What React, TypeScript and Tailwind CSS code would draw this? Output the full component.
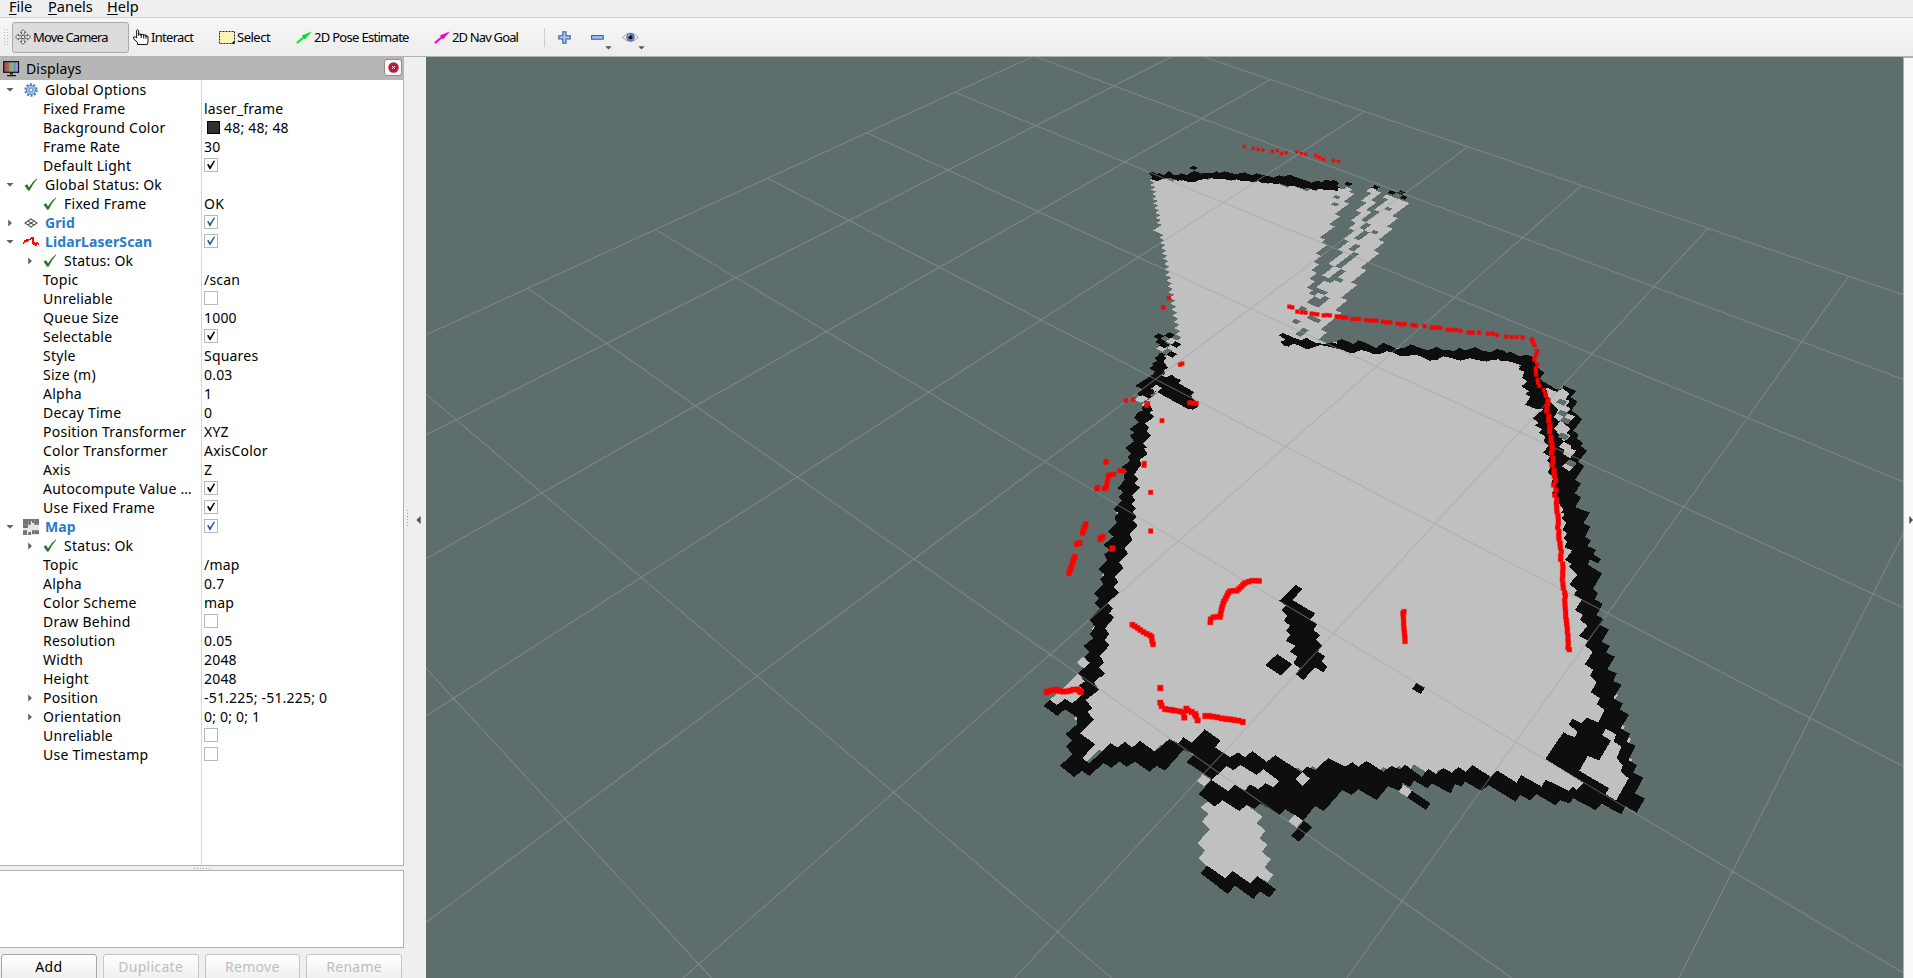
import React from "react";

/* ---------- 3D view geometry ---------- */

type Pt = [number, number];

// Known ground-plane intersections: grid row, grid column, screen x, screen y
const ANCHORS: [number, number, number, number][] = [
  [0, 2, 1270, 79.5], [0, 4, 1467.7, 146.7], [0, 6, 1707.9, 228.4], [0, 7, 1848.7, 276.3],
  [1, 0, 1033.9, 56.75], [3, 0, 866.3, 132.7], [5, 0, 655.4, 229.6], [6, 0, 527.9, 288.3],
  [2, 2, 1124.7, 162.3], [1, 3, 1298.3, 153.3], [1, 4, 1405, 194.7], [1, 5, 1522.3, 237.7],
  [2, 3, 1223, 202.3], [2, 4, 1332.7, 247], [2, 5, 1455, 297.3], [3, 3, 1138, 257],
  [2, 6, 1591.7, 354.3], [3, 5, 1376.7, 365.7], [3, 6, 1520, 432], [3, 7, 1684, 507.3],
  [4, 4, 1155.7, 379], [5, 4, 1045, 461.7], [4, 5, 1286, 446.3], [5, 5, 1178.7, 541.3],
  [6, 5, 1050, 654.3], [4, 6, 1434.3, 523.7], [5, 6, 1333.3, 633.7], [6, 6, 1210.3, 766.7],
  [4, 7, 1606.7, 613.3], [5, 7, 1515.7, 742], [6, 7, 1401.6, 900.9], [4, 8, 1809.8, 718.4],
  [7, 5, 893.7, 792], [8, 4, 564.8, 819.5], [7, 3, 641.2, 577.2], [8, 5, 698.8, 964.3],
];

function solveCamera(): number[] {
  const n = 8;
  const a: number[][] = Array.from({ length: n }, () => new Array(n + 1).fill(0));
  const add = (row: number[], rhs: number) => {
    for (let r = 0; r < n; r++) {
      for (let c = 0; c < n; c++) a[r][c] += row[r] * row[c];
      a[r][n] += row[r] * rhs;
    }
  };
  for (const [i, j, px, py] of ANCHORS) {
    const x = px / 1000;
    const y = py / 1000;
    add([i, j, 1, 0, 0, 0, -i * x, -j * x], x);
    add([0, 0, 0, i, j, 1, -i * y, -j * y], y);
  }
  for (let c = 0; c < n; c++) {
    let p = c;
    for (let r = c + 1; r < n; r++) if (Math.abs(a[r][c]) > Math.abs(a[p][c])) p = r;
    [a[c], a[p]] = [a[p], a[c]];
    for (let r = 0; r < n; r++) {
      if (r === c) continue;
      const f = a[r][c] / a[c][c];
      for (let k = c; k <= n; k++) a[r][k] -= f * a[c][k];
    }
  }
  return a.map((row, r) => row[n] / row[r]);
}

const H = solveCamera();
const depth = (i: number, j: number) => H[6] * i + H[7] * j + 1;
const project = (i: number, j: number): Pt => {
  const w = depth(i, j);
  return [(1000 * (H[0] * i + H[1] * j + H[2])) / w, (1000 * (H[3] * i + H[4] * j + H[5])) / w];
};

function gridPath(): string {
  let d = "";
  const trace = (at: (t: number) => Pt) => {
    let pen = false;
    for (let t = 0; t <= 10; t += 0.25) {
      const [i, j] = at(t);
      if (depth(i, j) < 0.05) {
        pen = false;
        continue;
      }
      const [x, y] = project(i, j);
      d += (pen ? "L" : "M") + x.toFixed(1) + " " + y.toFixed(1);
      pen = true;
    }
  };
  for (let k = 0; k <= 10; k++) {
    trace((t) => [k, t]);
    trace((t) => [t, k]);
  }
  return d;
}

/* Traces are stored in thirds of a pixel, relative to a tile's corner. */
type Tile = Pt;
const A: Tile = [1120, 130];
const B: Tile = [1000, 380];
const C: Tile = [1400, 330];
const D: Tile = [1000, 620];

const pts = (tile: Tile, s: string): Pt[] =>
  s.trim().split(/\s+/).map((p) => {
    const [x, y] = p.split(",").map(Number);
    return [tile[0] + x / 3, tile[1] + y / 3] as Pt;
  });

const raw = (s: string): Pt[] => s.trim().split(/\s+/).map((p) => p.split(",").map(Number) as Pt);

const FREE = 1;
const WALL = 2;
const UNKNOWN = 0;
const TINT = ["#5d6e6c", "#c0c0c0", "#0e0e0e"];

type Region = { v: number; poly: Pt[] };
type Marks = { v: number; at: Pt[] };

/* Large areas, rasterised to occupancy cells */
const AREAS: Region[] = [
  { v: FREE, poly: raw("1178,330 1170,350 1160,380 1147,403 1140,430 1128,480 1120,530 1107,580 1097,630 1090,670 1083,710 1078,745 1084,758 1130,748 1180,742 1230,758 1280,768 1330,772 1400,768 1480,778 1560,790 1612,802 1628,780 1622,730 1605,680 1590,630 1577,560 1565,500 1550,430 1540,390 1525,364 1500,357 1440,353 1380,349 1330,344 1285,338 1200,320") },
  { v: FREE, poly: pts(A, "95,150 180,150 300,145 420,155 560,178 650,182 690,165 770,175 805,192 855,220 825,260 800,305 775,345 765,370 735,410 710,450 680,495 665,530 640,570 612,600 602,636 480,640 180,640 178,610 165,570 150,490 135,400 115,300") },
  { v: UNKNOWN, poly: pts(A, "695,150 755,175 745,200 720,235 720,250 705,265 690,290 695,305 675,325 680,335 655,355 665,370 635,390 640,405 615,430 620,445 595,462 608,475 585,495 560,490 575,465 575,440 582,410 590,385 610,350 605,330 630,295 645,265 655,240 665,230 690,205 692,180") },
  { v: UNKNOWN, poly: pts(A, "775,170 805,190 800,205 775,235 755,265 740,295 748,315 712,345 712,365 705,375 690,400 665,425 660,450 640,458 625,465 630,440 655,415 652,400 685,372 692,350 712,322 722,300 735,265 745,235 768,200") },
];

const CELL_EDITS: Marks[] = [
  { v: UNKNOWN, at: pts(A, "655,200 645,225 800,238 757,303 573,507 573,490 610,500 600,510 615,490 565,515 603,524 590,531 555,540 538,577 575,572 585,565 562,604 550,611 165,628") },
  { v: FREE, at: pts(A, "672,185 682,180 150,635 150,655 130,662 122,655 140,690") },
];

/* Stepped outlines, painted in order above the rasterised areas */
const SHAPES: Region[] = [
  // far wall
  { v: WALL, poly: pts(A, "86,128 98,126 108,131 118,130 132,136 145,124 155,128 160,134 172,135 185,130 200,136 215,126 222,122 235,127 245,131 260,128 275,130 290,124 300,129 312,124 328,128 345,132 360,130 375,127 385,133 400,135 410,130 425,134 445,138 460,143 478,136 490,140 510,133 525,141 545,147 560,152 575,158 590,152 605,156 618,149 632,153 642,148 657,160 650,168 662,172 652,176 655,183 640,181 620,181 600,177 580,180 568,174 550,176 535,171 515,167 500,167 480,160 465,163 450,158 430,160 415,154 395,157 382,152 365,153 350,148 330,151 310,147 290,148 272,144 255,147 235,150 225,157 205,157 190,150 172,152 160,146 140,144 122,149 112,154 100,149 92,148 96,140") },
  // left recess
  { v: WALL, poly: pts(A, "118,668 137,672 130,679 140,684 132,690 132,697 145,714 130,722 136,730 125,738 140,742 155,734 168,744 185,750 175,760 200,773 224,788 212,796 234,824 232,832 218,839 200,835 115,788 102,784 100,790 88,795 97,800 80,808 50,792 56,785 68,778 46,768 60,758 100,733 105,725 88,715 100,706 95,700 112,693 102,684 115,678") },
  // left wall
  { v: WALL, poly: pts(B, "428,60 440,70 425,82 428,92 415,97 402,112 416,128 388,147 402,157 390,167 402,184 376,203 394,220 384,230 390,243 364,262 382,275 371,286 374,300 352,325 370,337 356,350 366,362 340,388 356,400 344,412 350,428 325,455 340,470 310,495 330,510 312,523 322,540 295,567 314,583 300,598 310,612 282,642 298,655 283,670 300,685 267,717 285,740 270,762 280,775 250,798 268,815 255,830 265,850 235,880 250,890 305,890 314,880 298,862 312,847 300,828 329,795 315,780 327,762 315,745 343,712 327,700 340,685 322,670 356,638 340,622 354,606 345,590 370,563 358,548 384,520 374,505 398,480 388,462 413,436 400,422 410,408 398,395 408,385 396,372 405,360 396,345 420,322 403,310 415,297 402,285 410,272 425,252 418,240 443,222 432,205 440,203 430,190 452,167 440,155 446,143 436,130 464,110 448,98 458,92 450,75") },
  { v: FREE, poly: pts(D, "235,160 255,185 240,198 252,212 235,240 215,250 195,237 170,257 148,240 190,205") },
  // lower-left corner and lower wall
  { v: WALL, poly: pts(D, "235,160 275,140 314,158 282,188 297,210 257,240 278,265 262,275 282,300 240,340 285,372 247,415 268,430 332,370 352,382 375,366 397,382 420,363 465,395 508,357 535,370 550,352 575,368 614,328 662,362 645,382 690,412 714,397 735,412 757,393 800,425 826,406 905,457 922,440 945,450 985,414 1035,440 1057,427 1075,440 1100,423 1150,455 1175,438 1205,450 1205,512 1190,510 1165,498 1130,540 1075,508 1055,525 1027,510 972,573 945,558 910,602 855,567 838,585 780,550 765,567 740,555 718,573 670,542 645,560 595,522 635,480 632,474 560,427 582,402 550,390 495,452 470,438 448,455 405,425 380,440 358,425 335,443 310,430 268,468 245,452 223,472 180,437 218,402 198,380 215,362 197,342 232,312 232,292 195,268 172,288 130,257 150,240 170,255 195,237 217,250 238,232 252,212 235,196 255,185") },
  { v: FREE, poly: pts(D, "635,480 680,438 700,450 722,435 770,465 790,448 838,484 820,502 797,490 775,507 750,493 735,512 705,495 685,514") },
  { v: FREE, poly: pts(D, "633,480 613,500 591,483 607,463") },
  { v: FREE, poly: pts(D, "623,545 645,560 667,541 718,573 740,555 788,590 770,610 797,632 778,655 803,675 785,695 812,718 793,742 820,765 803,786 772,770 752,791 697,755 675,775 620,738 597,714 615,692 592,670 630,627 606,604 625,582 602,561") },
  { v: WALL, poly: pts(D, "621,737 675,774 697,753 752,790 772,769 828,808 808,833 780,814 760,837 705,797 683,822 602,760") },
  { v: WALL, poly: pts(D, "912,602 936,621 897,665 873,648") },
  { v: FREE, poly: pts(D, "908,457 930,476 908,497 886,478") },
  { v: FREE, poly: pts(D, "884,583 908,602 890,623 865,604") },
  { v: FREE, poly: pts(D, "248,111 270,128 252,146 231,128") },
  // near wall, lower right
  { v: WALL, poly: pts(C, "-3,1320 15,1304 65,1340 85,1317 108,1332 130,1314 155,1328 175,1311 197,1325 218,1306 272,1340 292,1322 350,1358 363,1335 425,1370 437,1349 505,1382 520,1370 530,1380 550,1358 436,1287 490,1207 505,1215 525,1222 532,1205 506,1183 518,1166 545,1180 562,1163 595,1178 630,1150 650,1240 675,1390 690,1405 664,1452 605,1422 586,1440 520,1405 508,1420 480,1410 467,1426 410,1393 390,1411 360,1395 347,1415 265,1365 245,1383 195,1355 185,1370 165,1362 152,1390 95,1360 83,1375 42,1352 30,1372 -3,1352") },
  { v: WALL, poly: pts(C, "22,1403 35,1382 91,1420 78,1440") },
  { v: FREE, poly: pts(C, "10,1365 36,1382 22,1401 -4,1386") },
  // right wall
  { v: WALL, poly: pts(C, "345,98 395,78 405,100 420,120 434,128 420,145 430,155 470,178 488,176 490,166 530,184 512,202 533,215 515,240 546,268 520,302 536,315 530,325 550,340 542,348 561,362 535,395 552,410 525,450 543,460 525,490 543,502 526,532 570,548 550,580 570,590 555,620 573,632 562,648 588,660 580,672 602,688 595,700 567,688 565,705 606,730 580,775 594,790 585,808 608,822 590,855 611,868 600,885 627,899 605,935 630,948 618,968 645,980 622,1018 650,1030 640,1053 665,1064 640,1105 668,1120 660,1138 687,1155 662,1195 690,1211 680,1235 707,1248 685,1290 711,1305 700,1328 730,1343 705,1390 735,1405 710,1448 675,1428 640,1412 655,1380 620,1250 595,1176 614,1140 590,1122 600,1105 573,1087 590,1055 570,1038 580,1020 555,1003 578,965 555,947 564,932 537,918 562,888 540,868 549,855 525,840 546,808 522,795 531,780 508,763 531,735 507,710 516,702 495,690 516,662 495,648 502,635 490,625 502,610 487,600 500,575 485,565 497,548 480,525 470,510 455,490 465,475 455,460 460,440 443,427 455,405 442,392 450,380 430,368 446,347 430,333 437,320 416,308 426,297 405,287 416,278 397,265 430,238 410,238 375,224 392,200 375,192 387,184 364,168 383,155 366,143 374,125 355,118 366,108") },
  { v: FREE, poly: pts(C, "438,172 470,186 488,176 508,190 496,208 510,212 498,228 512,235 500,248 525,260 508,275 490,280 512,296 500,310 513,318 492,335 515,348 512,355 528,362 510,385 490,372 494,360 476,350 492,335 463,295 480,275 462,262 474,240 450,215 442,190") },
  { v: FREE, poly: pts(C, "498,398 520,412 508,424 487,410") },
  { v: WALL, poly: pts(C, "472,470 482,525 494,532 484,548 497,552 488,565 500,580 487,598 503,613 490,625 505,640 494,652 518,662 540,600 520,480") },
  // corner pocket
  { v: FREE, poly: pts(C, "563,1278 597,1291 633,1232 606,1215 618,1196 649,1214 640,1233 664,1250 650,1285 668,1305 662,1325 686,1345 648,1412 616,1392 627,1375 538,1322") },
  // upper room wall
  { v: WALL, poly: pts(A, "476,615 488,609 510,618 530,627 545,630 560,624 575,632 590,640 615,641 635,637 650,641 652,633 665,627 680,633 700,643 715,631 735,638 755,648 770,654 780,645 790,639 810,647 830,657 852,654 872,643 890,650 920,660 935,658 950,650 970,660 990,661 1000,664 1018,654 1037,661 1065,651 1085,661 1110,667 1130,657 1150,662 1160,669 1172,665 1200,680 1218,673 1240,682 1235,740 1205,716 1195,710 1205,705 1165,694 1145,694 1135,688 1115,690 1100,695 1070,690 1050,685 1020,692 995,684 970,679 950,690 928,692 905,680 890,675 865,677 842,679 820,668 800,664 780,672 762,673 740,664 722,660 705,668 690,669 665,659 645,655 620,648 600,645 580,652 562,658 540,648 520,641 505,650 490,646 482,634 498,630") },
  // obstacles inside the room
  { v: WALL, poly: pts(B, "887,615 908,627 877,660 945,700 935,715 930,720 952,732 940,750 960,765 948,780 967,797 953,815 975,828 965,845 983,860 970,877 945,862 910,900 887,882 900,865 880,850 893,830 870,815 886,797 857,783 870,765 858,752 870,737 851,722 863,707 843,690 858,677 838,662") },
  { v: WALL, poly: pts(B, "832,822 877,853 842,886 795,855") },
  { v: WALL, poly: pts(C, "50,1059 75,1073 62,1092 36,1077") },
];

/* Isolated cells that keep the local cell's shape */
const LOOSE: Marks[] = [
  { v: WALL, at: pts(A, "221,114 685,162 767,172 815,188 844,188 850,202 117,619 149,616 121,635 133,645 168,644 156,673") },
  { v: FREE, at: pts(A, "110,775 68,806 60,808") },
  { v: UNKNOWN, at: pts(C, "485,216 487,250 497,272 490,319 513,400") },
];

const inside = (x: number, y: number, poly: Pt[]) => {
  let hit = false;
  for (let a = 0, b = poly.length - 1; a < poly.length; b = a++) {
    const [ax, ay] = poly[a];
    const [bx, by] = poly[b];
    if (ay > y !== by > y && x < ((bx - ax) * (y - ay)) / (by - ay) + ax) hit = !hit;
  }
  return hit;
};

const toPath = (poly: Pt[]) => "M" + poly.map((p) => p[0].toFixed(2) + " " + p[1].toFixed(2)).join("L") + "Z";

const ROWS = 150;
const COLS = 180;
const RES = 20;

function buildMap() {
  const cells: number[][] = [];
  const centre: Pt[][] = [];
  for (let i = 0; i < ROWS; i++) {
    cells.push([]);
    centre.push([]);
    for (let j = 0; j < COLS; j++) {
      const u = (i + 0.5) / RES;
      const v = (j + 0.5) / RES;
      const p: Pt = depth(u, v) > 0.05 ? project(u, v) : [-1, -1];
      let value = 0;
      if (p[0] > 1060 && p[0] < 1660 && p[1] > 160 && p[1] < 820) {
        for (const r of AREAS) if (inside(p[0], p[1], r.poly)) value = r.v;
      }
      cells[i].push(value);
      centre[i].push(p);
    }
  }
  const nearest = (x: number, y: number): Pt => {
    let best = Infinity;
    let at: Pt = [0, 0];
    for (let i = 0; i < ROWS; i++) {
      for (let j = 0; j < COLS; j++) {
        const [cx, cy] = centre[i][j];
        const d = (cx - x) ** 2 + ((cy - y) * 1.6) ** 2;
        if (d < best) {
          best = d;
          at = [i, j];
        }
      }
    }
    return at;
  };
  for (const m of CELL_EDITS) {
    for (const [x, y] of m.at) {
      const [i, j] = nearest(x, y);
      cells[i][j] = m.v;
    }
  }
  const quad = (i0: number, j0: number, i1: number, j1: number): Pt[] => [
    project(i0 / RES, j0 / RES),
    project(i0 / RES, j1 / RES),
    project(i1 / RES, j1 / RES),
    project(i1 / RES, j0 / RES),
  ];
  let free = "";
  for (let i = 0; i < ROWS; i++) {
    for (let j = 0; j < COLS; ) {
      const v = cells[i][j];
      let k = j + 1;
      while (k < COLS && cells[i][k] === v) k++;
      if (v) free += toPath(quad(i - 0.05, j - 0.05, i + 1.05, k + 0.05));
      j = k;
    }
  }
  const loose = LOOSE.flatMap((m) =>
    m.at.map(([x, y]) => {
      const [i, j] = nearest(x, y);
      const dx = x - centre[i][j][0];
      const dy = y - centre[i][j][1];
      return { v: m.v, d: toPath(quad(i, j, i + 1, j + 1).map(([a, b]) => [a + dx, b + dy] as Pt)) };
    })
  );
  return { free, loose };
}

const SCAN: { s: number; at: Pt[] }[] = [
  { s: 3, at: pts(A, "373,49 400,55 415,58 429,60 457,64 472,62 485,71 499,68 530,66 544,70 557,73 587,76 598,82 610,88 640,91 655,94") },
  { s: 4, at: pts(A, "147,504 130,532 508,530 517,532 532,545 545,547 557,548 575,551 583,552 592,553 611,556 620,555 630,556 650,559 660,561 670,562 678,562 697,567 706,567 717,567 738,570 748,572 758,572 769,572 789,575 800,578 811,577 833,581 844,583 854,582 877,585 887,587 913,588 936,593 945,593 953,593 961,594 983,599 995,600 1009,600 1022,603 1046,607 1058,608 1077,607 1104,611 1118,611 1131,615 1158,620 1174,621 1190,621 1208,622 180,704 187,701") },
  { s: 4, at: pts(C, "396,28 399,36 403,45 411,63 408,75 404,85 403,90 412,103 407,115 408,123 408,134 413,150 414,158 418,168 431,180 436,190 437,197") },
  { s: 5, at: pts(C, "444,212 443,222 441,232 440,243 447,258 446,272 450,288 449,296 449,306 453,322 453,332 456,345 457,356 454,370 456,362 459,385 459,395 456,405 462,420 462,430 463,438 467,452 461,465 468,480 464,495 470,509 469,520 470,532 471,545 474,557 475,568 475,580 473,592 477,605 476,616 477,627 480,640 481,652 484,665 482,678 482,688 488,702 489,713 488,725 488,737 487,749 489,762 490,774 494,788 496,798 494,812 495,824 496,836 497,848 497,860 499,871 500,883 502,894 502,906 504,917 504,929 505,940 504,952 508,959 12,845 9,850 10,862 11,873 11,884 12,896 13,908 14,918 15,926 15,934") },
  { s: 4, at: pts(B, "378,62 399,58") },
  { s: 4.6, at: pts(B, "440,77 443,71 569,68 579,69 589,70 486,122 317,247 319,244 433,250 432,256 452,337 452,453 360,272 370,273 341,283 329,285 324,288 324,298 321,308 320,318 317,324 312,326 293,322 290,327") },
  { s: 5.3, at: pts(B, "257,433 254,442 251,451 248,458 239,489 230,493 224,531 220,541 217,551 213,563 210,571 207,579 308,470 303,474 301,478 338,504 336,507 631,727 632,718 640,712 650,710 660,711 662,702 664,690 666,682 669,672 672,664 677,655 681,647 685,639 690,634 700,632 710,632 716,627 723,621 729,614 735,609 745,605 755,602 767,602 777,603 397,734 405,739 413,744 421,750 430,756 440,761 449,766 455,770 456,782 459,793") },
  { s: 5.7, at: pts(D, "140,216 150,213 160,210 170,209 180,213 190,215 200,214 210,212 220,209 232,208 239,213 242,216 481,204 481,248 485,258 495,267 505,269 515,270 525,272 540,274 550,278 553,293 559,266 565,272 575,276 585,282 588,288 593,301 616,288 627,288 640,290 652,292 665,295 678,297 690,298 702,300 715,302 728,306") },
];

function scanPath(grow: number): string {
  let d = "";
  for (const g of SCAN) {
    for (const [x, y] of g.at) {
      const s = g.s + grow;
      d += `M${(x - s / 2).toFixed(2)} ${(y - s / 2).toFixed(2)}h${s}v${s}h${-s}z`;
    }
  }
  return d;
}

const MAP = buildMap();
const GRID = gridPath();

function Viewport() {
  return (
    <svg className="block h-[921px] w-[1477px] shrink-0 bg-[#5d6e6c]" viewBox="426 57 1477 921">
      <g shapeRendering="crispEdges">
        <path d={MAP.free} fill="#c0c0c0" />
        {SHAPES.map((s, k) => (
          <path key={k} d={toPath(s.poly)} fill={TINT[s.v]} />
        ))}
        {MAP.loose.map((s, k) => (
          <path key={k} d={s.d} fill={TINT[s.v]} />
        ))}
      </g>
      <path d={GRID} fill="none" stroke="#a0a0a4" strokeOpacity="0.5" strokeWidth="1.1" />
      <path d={scanPath(0.7)} fill="#ff0000" fillOpacity="0.4" />
      <path d={scanPath(-0.3)} fill="#ff0000" />
    </svg>
  );
}

/* ---------- icons ---------- */

const GearIcon = () => (
  <svg width="14" height="14" viewBox="0 0 14 14">
    <circle cx="7" cy="7" r="5.7" fill="none" stroke="#4a7cc0" strokeWidth="2" strokeDasharray="2 1.58" />
    <circle cx="7" cy="7" r="4.6" fill="#a9c4e6" stroke="#4a7cc0" strokeWidth="0.9" />
    <circle cx="7" cy="7" r="2" fill="#eef3fa" stroke="#4a7cc0" strokeWidth="0.9" />
  </svg>
);

const TickIcon = () => (
  <svg width="14" height="14" viewBox="0 0 14 14">
    <path d="M0.6 7.4 L3.2 6.3 L5 9.4 Q8 4 12.8 0.6 L13.2 1 Q8.6 6 5.6 12.6 L4.2 12.8 Z" fill="#22752a" />
  </svg>
);

const GridIcon = () => (
  <svg width="14" height="10" viewBox="0 0 14 10" fill="none" stroke="#555" strokeWidth="1.1">
    <path d="M7 1 L13 5 L7 9 L1 5 Z M4 3 L10 7 M10 3 L4 7" />
  </svg>
);

const ScanIcon = () => (
  <svg width="16" height="10" viewBox="0 0 16 10" fill="#fb0505" shapeRendering="crispEdges">
    <path d="M0 5h1v-2h2v-1h4v-1h1v-1h3v5h1v1h1v-1h2v1h1v2h-1v-1h-1v2h-2v-1h-2v-1h-1v-5h-1v1h-2v1h-1v1h-3v1h-1v1h-1z" />
  </svg>
);

const MapIcon = () => (
  <svg width="16" height="16" viewBox="0 0 16 16" shapeRendering="crispEdges">
    <rect width="16" height="16" fill="#e6e6e6" />
    <path d="M0 0h9v2h-1v4h-3v3h-5z M9 0h7v6h-5v-2h-2z M0 11h4v5h-4z M5 13h3v3h-3z M9 11h7v4h-7z" fill="#747474" />
    <path d="M0 5.5H16M0 11.5H16M5.5 0V16M11.5 0V16" stroke="#fff" strokeOpacity="0.2" strokeWidth="1" />
  </svg>
);

const MonitorIcon = () => (
  <svg width="17" height="16" viewBox="0 0 17 16">
    <defs>
      <linearGradient id="screen" x1="0" x2="1">
        <stop offset="0" stopColor="#a84848" />
        <stop offset="0.33" stopColor="#b06060" />
        <stop offset="0.34" stopColor="#6fae6f" />
        <stop offset="0.66" stopColor="#7fc07f" />
        <stop offset="0.67" stopColor="#7878c8" />
        <stop offset="1" stopColor="#a8a8f0" />
      </linearGradient>
    </defs>
    <rect x="0.7" y="0.7" width="14.8" height="10.6" fill="url(#screen)" stroke="#111" strokeWidth="1.2" />
    <path d="M7 11.5h3v2h-3zM4 14h9v1.3h-9z" fill="#111" />
  </svg>
);

const MoveIcon = () => (
  <svg width="16" height="16" viewBox="0 0 16 16" fill="#f4f4f4" stroke="#4a4a4a" strokeWidth="0.9">
    <path d="M8 0.6 L10.8 3.4 H9.2 V5.6 L10.4 6.8 H12.6 V5.2 L15.5 8 L12.6 10.8 V9.2 H10.4 L9.2 10.4 V12.6 H10.8 L8 15.4 L5.2 12.6 H6.8 V10.4 L5.6 9.2 H3.4 V10.8 L0.5 8 L3.4 5.2 V6.8 H5.6 L6.8 5.6 V3.4 H5.2 Z" />
    <circle cx="8" cy="8" r="1.7" />
  </svg>
);

const HandIcon = () => (
  <svg width="16" height="16" viewBox="0 0 16 16" fill="#fff" stroke="#111" strokeWidth="1">
    <path d="M4.5 15.5 V13.5 L0.6 9.8 V8 H2.4 L3.6 9 V1.5 L4.4 0.6 L5.6 1.5 V6.5 V5 H8 V7 V5.5 H10.6 V7.5 V6 H13 V8 V6.8 L15 7.4 V13 L14.2 15.5 Z" />
    <path d="M8.2 7v2M10.7 7.5v2M13 8v1.8" />
  </svg>
);

const SelectIcon = () => (
  <svg width="16" height="13" viewBox="0 0 16 13">
    <rect x="0.5" y="0.5" width="15" height="12" fill="#fcf3b4" stroke="#222" strokeDasharray="2 1" />
    <path d="M15.5 9.5V12.5H12.5Z" fill="#000" />
  </svg>
);

const ArrowIcon = ({ color, dark }: { color: string; dark: string }) => (
  <svg width="16" height="13" viewBox="0 0 16 13">
    <path d="M0.8 12 L7.5 6.5" stroke={color} strokeWidth="2.2" />
    <path d="M15.8 0.4 L5.6 4.6 L8 6 L9 8.4 Z" fill={color} />
    <path d="M6.4 5 L8.6 8 L8.8 5.6 Z" fill={dark} />
  </svg>
);

const EyeIcon = () => (
  <svg width="17" height="11" viewBox="0 0 17 11">
    <path d="M0.6 5.5 Q8.5 -3.5 16.4 5.5 Q8.5 13.5 0.6 5.5Z" fill="#f3f3f1" stroke="#a5a5a0" strokeWidth="1" />
    <circle cx="8.5" cy="5.3" r="4" fill="#6f80b8" stroke="#55629a" strokeWidth="0.6" />
    <circle cx="8.5" cy="5.3" r="2" fill="#0b1030" />
    <circle cx="6.8" cy="3.6" r="0.8" fill="#dfe5ff" />
  </svg>
);

const DropArrow = () => (
  <svg width="7" height="4" viewBox="0 0 7 4">
    <path d="M0.3 0.3H6.7L3.5 3.6Z" fill="#555" />
  </svg>
);

const PlusIcon = () => (
  <svg width="13" height="13" viewBox="0 0 13 13">
    <path d="M4.8 0.8h3.2v4h4.2v3.2h-4.2v4.2h-3.2v-4.2h-4v-3.2h4z" fill="#a9c5ea" stroke="#2f62a8" strokeWidth="1.1" />
  </svg>
);

const MinusIcon = () => (
  <svg width="13" height="5" viewBox="0 0 13 5">
    <rect x="0.6" y="0.6" width="11.6" height="3.6" fill="#a9c5ea" stroke="#2f62a8" strokeWidth="1.1" />
  </svg>
);

/* ---------- property tree ---------- */

type Row = {
  level?: 0 | 1;
  open?: boolean;
  expandable?: boolean;
  icon?: React.ReactNode;
  label: string;
  accent?: boolean;
  value?: string;
  swatch?: boolean;
  check?: boolean;
};

const ROWS_DATA: Row[] = [
  { level: 0, open: true, expandable: true, icon: <GearIcon />, label: "Global Options" },
  { label: "Fixed Frame", value: "laser_frame" },
  { label: "Background Color", value: "48; 48; 48", swatch: true },
  { label: "Frame Rate", value: "30" },
  { label: "Default Light", check: true },
  { level: 0, open: true, expandable: true, icon: <TickIcon />, label: "Global Status: Ok" },
  { icon: <TickIcon />, label: "Fixed Frame", value: "OK" },
  { level: 0, expandable: true, icon: <GridIcon />, label: "Grid", accent: true, check: true },
  { level: 0, open: true, expandable: true, icon: <ScanIcon />, label: "LidarLaserScan", accent: true, check: true },
  { expandable: true, icon: <TickIcon />, label: "Status: Ok" },
  { label: "Topic", value: "/scan" },
  { label: "Unreliable", check: false },
  { label: "Queue Size", value: "1000" },
  { label: "Selectable", check: true },
  { label: "Style", value: "Squares" },
  { label: "Size (m)", value: "0.03" },
  { label: "Alpha", value: "1" },
  { label: "Decay Time", value: "0" },
  { label: "Position Transformer", value: "XYZ" },
  { label: "Color Transformer", value: "AxisColor" },
  { label: "Axis", value: "Z" },
  { label: "Autocompute Value …", check: true },
  { label: "Use Fixed Frame", check: true },
  { level: 0, open: true, expandable: true, icon: <MapIcon />, label: "Map", accent: true, check: true },
  { expandable: true, icon: <TickIcon />, label: "Status: Ok" },
  { label: "Topic", value: "/map" },
  { label: "Alpha", value: "0.7" },
  { label: "Color Scheme", value: "map" },
  { label: "Draw Behind", check: false },
  { label: "Resolution", value: "0.05" },
  { label: "Width", value: "2048" },
  { label: "Height", value: "2048" },
  { expandable: true, label: "Position", value: "-51.225; -51.225; 0" },
  { expandable: true, label: "Orientation", value: "0; 0; 0; 1" },
  { label: "Unreliable", check: false },
  { label: "Use Timestamp", check: false },
];

const Expander = ({ open }: { open?: boolean }) => (
  <svg width="8" height="8" viewBox="0 0 8 8" fill="#626262">
    {open ? <path d="M0.5 2H7.5L4 5.8Z" /> : <path d="M2.2 0.5V7.5L6 4Z" />}
  </svg>
);

const Check = ({ on, accent }: { on: boolean; accent?: boolean }) => (
  <span className="mt-[2px] flex h-[14px] w-[14px] items-center justify-center self-start border border-[#b8b8b8] bg-white">
    {on && (
      <svg width="10" height="10" viewBox="0 0 10 10">
        <path d="M1 4.6 L2.8 4 L4 6.4 L7.6 0.8 L9.2 0.8 L4.4 9.2 H3.6 Z" fill={accent ? "#25639e" : "#000"} />
      </svg>
    )}
  </span>
);

function TreeRow({ row }: { row: Row }) {
  const top = row.level === 0;
  return (
    <div className="flex h-[19px] shrink-0 whitespace-nowrap">
      <div className="flex w-[201px] items-center">
        <span className={`flex shrink-0 items-center justify-center ${top ? "w-[20px]" : "ml-[20px] w-[20px]"}`}>
          {row.expandable && <Expander open={row.open} />}
        </span>
        {row.icon && (
          <span className={`flex shrink-0 items-center justify-center ${top ? "w-[22px]" : "w-[21px] pr-[2px]"}`}>
            {row.icon}
          </span>
        )}
        <span
          className={`leading-[19px] ${row.icon ? "ml-[3px]" : "ml-[3px]"} ${
            row.accent ? "font-bold tracking-[0.1px] text-[#2a7bc8]" : "tracking-[0.25px]"
          }`}
        >
          {row.label}
        </span>
      </div>
      <div className="flex flex-1 items-center border-l border-[#d8d8d8] pl-[2px]">
        {row.swatch && <span className="mr-[4px] ml-[3px] h-[13px] w-[13px] border border-black bg-[#303030]" />}
        {row.value && <span className="leading-[19px] tracking-[0.2px]">{row.value}</span>}
        {row.check !== undefined && <Check on={row.check} accent={row.accent} />}
      </div>
    </div>
  );
}

/* ---------- chrome ---------- */

const Tool = ({ icon, label, className }: { icon: React.ReactNode; label: string; className: string }) => (
  <div className={`flex h-[31px] shrink-0 items-center whitespace-nowrap ${className}`}>
    <span className="mr-[2px] flex w-[16px] shrink-0 justify-center">{icon}</span>
    <span className="pt-px">{label}</span>
  </div>
);

const Button = ({ label, disabled }: { label: string; disabled?: boolean }) => (
  <div
    className={`flex h-[30px] flex-1 items-start justify-center rounded-[3px] border bg-gradient-to-b from-white to-[#ececec] pt-px leading-[21px] tracking-[0.3px] ${
      disabled ? "border-[#c6c6c6] text-[#bebebe]" : "border-[#a6a6a6] text-black"
    }`}
  >
    {label}
  </div>
);

export default function App() {
  return (
    <div className="flex h-[978px] w-[1913px] flex-col overflow-hidden bg-[#efefef] font-['Noto_Sans',sans-serif] text-[14px] text-black">
      <div className="flex h-[17px] shrink-0 items-start pl-[9px] text-[14.5px] leading-[13px]">
        {[
          ["F", "ile", "w-[39px]"],
          ["P", "anels", "w-[59px]"],
          ["H", "elp", "w-[40px]"],
        ].map(([a, b, w]) => (
          <span key={a} className={w}>
            <span className="underline decoration-1 underline-offset-[2px]">{a}</span>
            {b}
          </span>
        ))}
      </div>

      <div className="flex h-[40px] shrink-0 items-center border-t border-b border-t-[#d2d2d2] border-b-[#b2b2b2] bg-gradient-to-b from-[#f7f7f7] to-[#ececec] text-[13px] tracking-[-0.7px]">
        <div className="ml-[4px] grid w-[8px] grid-cols-[1px_1px] gap-[2px]">
          {Array.from({ length: 12 }, (_, k) => (
            <span key={k} className="h-px w-px bg-[#b8b8b8]" />
          ))}
        </div>
        <Tool icon={<MoveIcon />} label="Move Camera" className="w-[117px] rounded-[3px] border border-[#a9a9a9] bg-[#dcdcdc] pl-[2px] tracking-[-0.85px]" />
        <Tool icon={<HandIcon />} label="Interact" className="w-[86px] pl-[4px]" />
        <Tool icon={<SelectIcon />} label="Select" className="w-[77px] pl-[4px] tracking-[-0.5px]" />
        <Tool icon={<ArrowIcon color="#00f028" dark="#109020" />} label="2D Pose Estimate" className="w-[138px] pl-[4px]" />
        <Tool icon={<ArrowIcon color="#ff00dc" dark="#90107c" />} label="2D Nav Goal" className="w-[114px] pl-[4px] tracking-[-0.85px]" />
        <div className="h-[19px] w-px bg-[#cccccc]" />
        <div className="ml-[13px] w-[33px]"><PlusIcon /></div>
        <div className="w-[14px]"><MinusIcon /></div>
        <div className="mt-[22px] w-[17px]"><DropArrow /></div>
        <div className="w-[16px]"><EyeIcon /></div>
        <div className="mt-[22px]"><DropArrow /></div>
      </div>

      <div className="flex h-[921px] shrink-0">
        <div className="flex w-[404px] shrink-0 flex-col">
          <div className="flex h-[23px] shrink-0 items-center justify-between bg-[#b6b6b6] pr-[2px] pl-[3px]">
            <div className="flex items-center gap-[6px]">
              <MonitorIcon />
              <span className="leading-[23px] tracking-[0.15px]">Displays</span>
            </div>
            <div className="mb-[2px] flex h-[17px] w-[18px] items-center justify-center rounded-[3px] border border-[#8f8f8f] bg-[#f8f8f8]">
              <svg width="11" height="11" viewBox="0 0 11 11">
                <circle cx="5.5" cy="5.5" r="5.2" fill="#c8143a" />
                <path d="M4 4L7 7M7 4L4 7" stroke="#fff" strokeWidth="1" />
              </svg>
            </div>
          </div>

          <div className="flex h-[786px] shrink-0 flex-col border-r border-b border-[#b0b0b0] bg-white">
            {ROWS_DATA.map((row, k) => (
              <TreeRow key={k} row={row} />
            ))}
            <div className="flex flex-1">
              <div className="w-[201px]" />
              <div className="flex-1 border-l border-[#d8d8d8]" />
            </div>
          </div>
          <div className="flex h-[4px] shrink-0 items-center justify-center gap-[2px]">
            {Array.from({ length: 6 }, (_, k) => (
              <span key={k} className="h-px w-px bg-[#a0a0a0]" />
            ))}
          </div>
          <div className="h-[78px] shrink-0 border-t border-r border-b border-[#b0b0b0] bg-white" />
          <div className="mt-[6px] flex gap-[6px] pr-[2px] pl-px">
            <Button label="Add" />
            <Button label="Duplicate" disabled />
            <Button label="Remove" disabled />
            <Button label="Rename" disabled />
          </div>
        </div>

        <div className="flex w-[22px] shrink-0 items-center gap-[8px] pl-[3px]">
          <div className="flex flex-col gap-[2px]">
            {Array.from({ length: 6 }, (_, k) => (
              <span key={k} className="h-px w-px bg-[#a0a0a0]" />
            ))}
          </div>
          <svg width="5" height="8" viewBox="0 0 5 8" className="mb-[-4px]">
            <path d="M4.6 0V8L0.4 4Z" fill="#4d4d4d" />
          </svg>
        </div>

        <Viewport />

        <div className="flex flex-1 items-center justify-end border-t border-l border-[#b0b0b0] bg-[#f9f9f9]">
          <svg width="4" height="8" viewBox="0 0 4 8" className="mb-[-4px]">
            <path d="M0.3 0V8L4 4Z" fill="#4d4d4d" />
          </svg>
        </div>
      </div>
    </div>
  );
}
